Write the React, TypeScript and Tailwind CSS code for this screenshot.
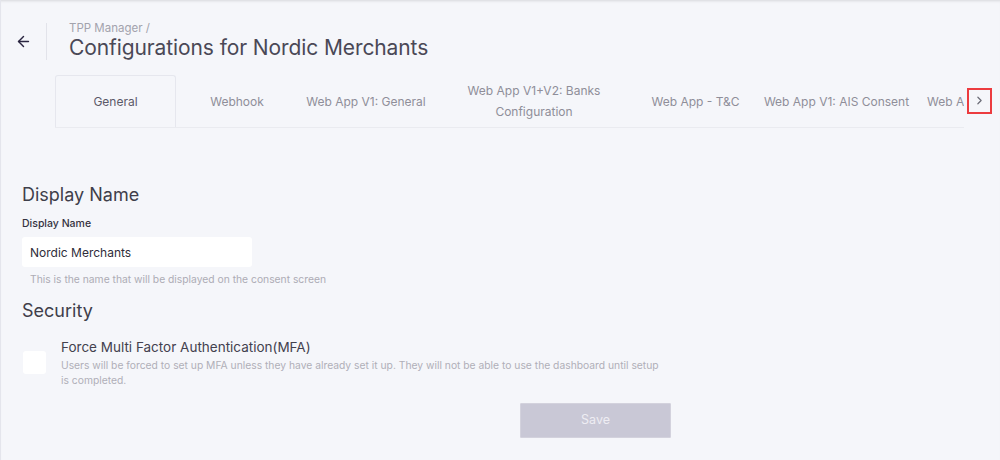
import React from 'react';
import { ArrowLeft, ChevronRight } from 'lucide-react';

const tabs = [
  { label: 'General', width: 'w-[121px]' },
  { label: 'Webhook', width: 'w-[122px]' },
  { label: 'Web App V1: General', width: 'w-[136px]' },
  { label: 'Web App V1+V2: Banks Configuration', width: 'w-[200px]' },
  { label: 'Web App - T&C', width: 'w-[123px]' },
  { label: 'Web App V1: AIS Consent', width: 'w-[159px]' },
  { label: 'Web App V2: PIS Consent', width: 'w-[160px]' }
];

const App: React.FC = () => {
  return (
    <div
      className="w-[1000px] h-[460px] overflow-hidden bg-[#f5f6fa] border-l border-[#e4e5ec] shadow-[inset_0_3px_3px_-2px_rgba(0,0,0,0.12)]"
      style={{ fontFamily: 'Inter, "Open Sans", sans-serif' }}
    >
      {/* Header */}
      <div className="flex items-center pt-[21px] pl-[14px]">
        <button className="text-[#2a2540]">
          <ArrowLeft className="h-[17px] w-[17px]" strokeWidth={2} />
        </button>
        <div className="ml-[14px] h-[37px] w-px bg-[#e2e3ea]" />
        <div className="ml-[22px] mt-[1px]">
          <div className="text-[11.5px] leading-[13px] text-[#a3a3ad]">TPP Manager /</div>
          <h1 className="text-[21px] leading-[26px] text-[#4a4856] tracking-[-0.1px]">
            Configurations for Nordic Merchants
          </h1>
        </div>
      </div>

      {/* Tabs */}
      <div className="flex items-center mt-[14px] pl-[54px] pr-[8px]">
        <div className="flex-1 overflow-hidden border-b border-[#eaebf0]">
          <div className="flex h-[52px]">
            {tabs.map((tab, i) => (
              <div
                key={tab.label}
                className={`${tab.width} shrink-0 flex items-center justify-center text-center text-[12px] leading-[21px] ${
                  i === 0
                    ? 'border border-b-0 border-[#e6e7ee] rounded-t-[3px] text-[#5b5968]'
                    : 'text-[#8f8e99]'
                } ${i === 3 ? 'px-[28px]' : ''} ${i === 6 ? 'justify-start pl-[11px]' : ''}`}
              >
                <span className={i === 6 ? 'whitespace-nowrap' : ''}>{tab.label}</span>
              </div>
            ))}
          </div>
        </div>
        <button className="ml-[3px] -mt-[2px] flex h-[26px] w-[25px] items-center justify-center border-2 border-[#ec3b3f] text-[#6b6b76]">
          <ChevronRight className="h-[13px] w-[13px]" strokeWidth={2.2} />
        </button>
      </div>

      {/* Content */}
      <div className="px-[21px] pt-[55px]">
        <h2 className="text-[18px] leading-[24px] text-[#3f3e4a]">Display Name</h2>
        <label className="mt-[10px] block text-[10.5px] leading-[14px] font-medium text-[#34323f]">
          Display Name
        </label>
        <input
          readOnly
          value="Nordic Merchants"
          className="mt-[6px] block h-[30px] w-[230px] rounded-[3px] bg-white px-[8px] text-[12px] text-[#2f2d3a] outline-none"
        />
        <p className="mt-[5px] pl-[8px] text-[10.3px] leading-[14px] text-[#adacb5]">
          This is the name that will be displayed on the consent screen
        </p>

        <h2 className="mt-[13px] text-[18px] leading-[24px] text-[#3f3e4a]">Security</h2>

        <div className="mt-[15px] flex items-start">
          <div className="mt-[13px] ml-[1px] h-[23px] w-[23px] shrink-0 rounded-[3px] bg-white" />
          <div className="ml-[15px] w-[605px]">
            <div className="text-[13.5px] leading-[18px] text-[#43414e]">
              Force Multi Factor Authentication(MFA)
            </div>
            <p className="mt-[2px] text-[10.3px] leading-[15px] text-[#b0afb8]">
              Users will be forced to set up MFA unless they have already set it up. They will not be able to use the
              dashboard until setup is completed.
            </p>
          </div>
        </div>

        <div className="mt-[15px] pl-[498px]">
          <button className="h-[35px] w-[151px] rounded-[1px] bg-[#c9c8d6] text-[12.5px] text-[#eeedf3] border border-[#d3d2dd]">
            Save
          </button>
        </div>
      </div>
    </div>
  );
};

export default App;
